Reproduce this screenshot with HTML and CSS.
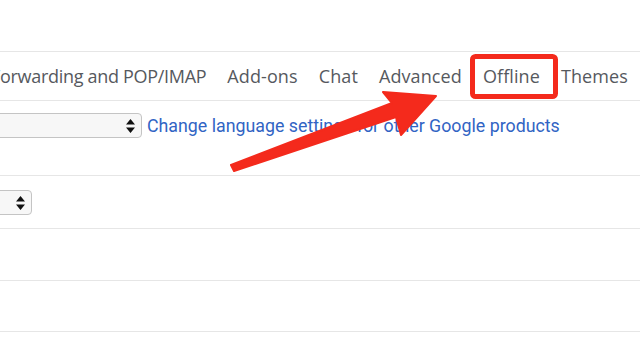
FILE: index.html
```html
<!DOCTYPE html>
<html>
<head>
    <title>Settings</title>
    <link rel="stylesheet" href="styles.css">
</head>
<body>
    <div class="page">
        <div class="top"></div>
        <div class="tabs">
            <span class="tab first">Forwarding and POP/IMAP</span>
            <span class="tab">Add-ons</span>
            <span class="tab">Chat</span>
            <span class="tab">Advanced</span>
            <span class="tab">Offline</span>
            <span class="tab">Themes</span>
        </div>
        <div class="row row-lang">
            <div class="select select-lang">
                <svg class="updown" width="9" height="14" viewBox="0 0 9 14"><path d="M4.5 0 L9 5.5 H0 Z M0 8.5 H9 L4.5 14 Z" fill="#111"/></svg>
            </div>
            <a class="link" href="#">Change language settings for other Google products</a>
        </div>
        <div class="row row-small">
            <div class="select select-small">
                <svg class="updown" width="9" height="14" viewBox="0 0 9 14"><path d="M4.5 0 L9 5.5 H0 Z M0 8.5 H9 L4.5 14 Z" fill="#111"/></svg>
            </div>
        </div>
        <div class="row row-empty"></div>
        <div class="row row-empty last"></div>
    </div>

    <svg class="marks" width="640" height="345" viewBox="0 0 640 345">
        <rect x="472.5" y="56.5" width="83" height="40" rx="3" fill="none" stroke="#f42a1c" stroke-width="5"/>
        <path d="M231 165 L392 103 L383 92 L436 96 L401 135 L396 117 L234 171 Z" fill="#f42a1c" stroke="#f42a1c" stroke-width="2" stroke-linejoin="round"/>
    </svg>
</body>
</html>
```

FILE: styles.css
```css
body {
    margin: 0;
    width: 640px;
    height: 345px;
    overflow: hidden;
    background: #fff;
    position: relative;
    font-family: "Open Sans", "Roboto", sans-serif;
}

.page {
    width: 640px;
}

.top {
    height: 51px;
    border-bottom: 1px solid #e6e6e6;
}

.tabs {
    height: 48px;
    display: flex;
    align-items: center;
    gap: 21px;
    margin-left: -9px;
    white-space: nowrap;
    border-bottom: 1px solid #e6e6e6;
}

.tab {
    font-size: 18px;
    color: #56595e;
    letter-spacing: 0.1px;
}

.tab.first {
    letter-spacing: -0.3px;
}

.row {
    border-bottom: 1px solid #e6e6e6;
    display: flex;
    align-items: flex-start;
}

.row-lang {
    height: 62px;
    padding-top: 12px;
}

.row-small {
    height: 38px;
    padding-top: 14px;
}

.row-empty {
    height: 51px;
}

.row-empty.last {
    height: 50px;
}

.select {
    border: 1px solid #c4c4c4;
    border-radius: 4px;
    background: #f7f7f7;
    display: flex;
    align-items: center;
    justify-content: flex-end;
    padding-right: 6px;
    box-sizing: border-box;
}

.select-lang {
    width: 154px;
    margin-left: -12px;
    height: 25px;
}

.select-small {
    width: 44px;
    margin-left: -12px;
    height: 25px;
}

.link {
    margin-left: 5px;
    font-family: "Roboto", sans-serif;
    font-size: 17.8px;
    line-height: 25px;
    color: #3164c4;
    text-decoration: none;
}

.marks {
    position: absolute;
    left: 0;
    top: 0;
}
```
